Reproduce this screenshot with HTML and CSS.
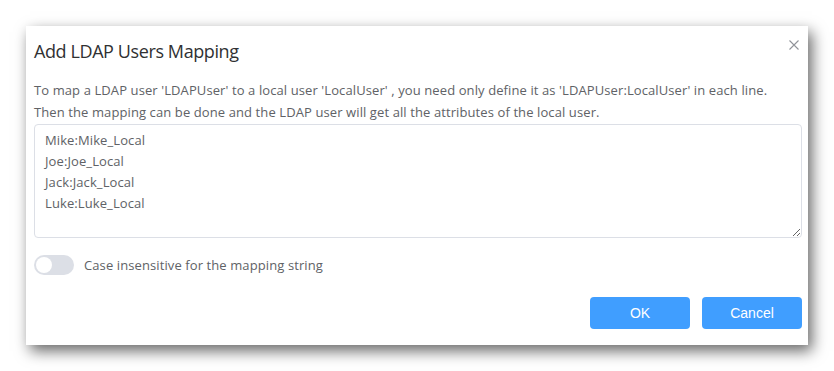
FILE: index.html
```html
<!DOCTYPE html>
<html lang="en">
<head>
    <meta charset="UTF-8">
    <meta name="viewport" content="width=device-width, initial-scale=1.0">
    <title>Add LDAP Users Mapping</title>
    <link rel="stylesheet" href="styles.css">
</head>
<body>
    <div class="dialog">
        <!-- Header -->
        <div class="dialog-header">
            <span class="dialog-title">Add LDAP Users Mapping</span>
            <button class="dialog-close" aria-label="Close">
                <svg width="10" height="10" viewBox="0 0 10 10">
                    <path d="M0.5 0.5 L9.5 9.5 M9.5 0.5 L0.5 9.5" stroke="#909399" stroke-width="1.1" fill="none"/>
                </svg>
            </button>
        </div>

        <!-- Body -->
        <div class="dialog-body">
            <p class="hint">To map a LDAP user 'LDAPUser' to a local user 'LocalUser' , you need only define it as 'LDAPUser:LocalUser' in each line.<br>Then the mapping can be done and the LDAP user will get all the attributes of the local user.</p>
            <textarea class="mapping-input">Mike:Mike_Local
Joe:Joe_Local
Jack:Jack_Local
Luke:Luke_Local</textarea>
            <label class="switch-row">
                <span class="switch"><span class="switch-knob"></span></span>
                <span class="switch-label">Case insensitive for the mapping string</span>
            </label>
        </div>

        <!-- Footer -->
        <div class="dialog-footer">
            <button class="btn">OK</button>
            <button class="btn">Cancel</button>
        </div>
    </div>
</body>
</html>
```

FILE: styles.css
```css
/* General Styling */
body {
    font-family: 'Open Sans', 'Noto Sans', sans-serif;
    margin: 0;
    padding: 26px;
    background: #fff;
    color: #606266;
}

/* Dialog Container */
.dialog {
    width: 782px;
    height: 319px;
    box-sizing: border-box;
    padding: 0 6px 16px 8px;
    background: #fff;
    box-shadow: 4px 6px 14px rgba(0, 0, 0, 0.6);
    display: flex;
    flex-direction: column;
}

.dialog-header {
    display: flex;
    justify-content: space-between;
    align-items: flex-start;
    padding-top: 13px;
}

.dialog-title {
    font-size: 18px;
    line-height: 24px;
    letter-spacing: -0.4px;
    color: #303133;
}

.dialog-close {
    border: none;
    background: none;
    padding: 0;
    margin: 1px 3px 0 0;
    width: 10px;
    height: 10px;
    line-height: 0;
    cursor: pointer;
}

/* Body */
.dialog-body {
    display: flex;
    flex-direction: column;
    margin-top: 16px;
}

.hint {
    margin: 0 0 1px;
    font-size: 13px;
    line-height: 22px;
    letter-spacing: 0.1px;
}

.mapping-input {
    height: 114px;
    box-sizing: border-box;
    padding: 5px 10px;
    font-family: inherit;
    font-size: 13px;
    line-height: 21px;
    letter-spacing: 0.1px;
    color: #606266;
    border: 1px solid #dcdfe6;
    border-radius: 4px;
    resize: vertical;
    outline: none;
}

/* Switch */
.switch-row {
    display: flex;
    align-items: center;
    gap: 10px;
    margin-top: 17px;
    height: 20px;
}

.switch {
    width: 40px;
    height: 20px;
    border-radius: 10px;
    background: #dcdfe6;
    display: flex;
    align-items: center;
    padding: 0 2px;
    box-sizing: border-box;
}

.switch-knob {
    width: 16px;
    height: 16px;
    border-radius: 50%;
    background: #fff;
}

.switch-label {
    font-size: 13px;
    line-height: 20px;
    letter-spacing: 0.1px;
}

/* Footer */
.dialog-footer {
    display: flex;
    justify-content: flex-end;
    gap: 12px;
    margin-top: 22px;
}

.btn {
    width: 100px;
    height: 32px;
    border: none;
    border-radius: 4px;
    background: #409eff;
    color: #fff;
    font-family: 'Liberation Sans', Arial, sans-serif;
    font-size: 14px;
    cursor: pointer;
}
```
